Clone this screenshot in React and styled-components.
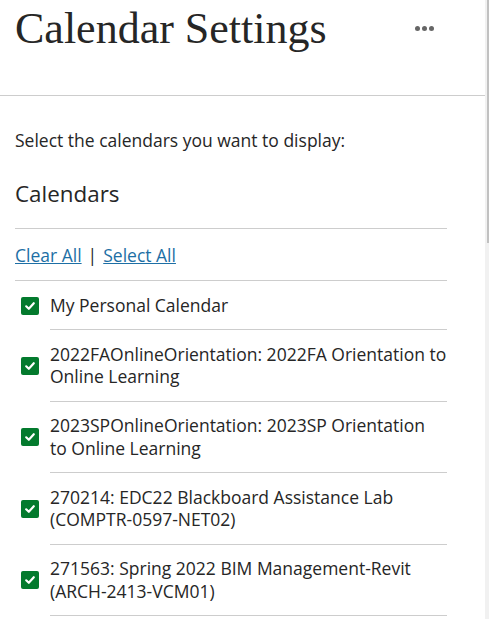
import styled, { createGlobalStyle } from "styled-components";

const calendars = [
  "My Personal Calendar",
  "2022FAOnlineOrientation: 2022FA Orientation to Online Learning",
  "2023SPOnlineOrientation: 2023SP Orientation to\u00A0Online Learning",
  "270214: EDC22 Blackboard Assistance Lab (COMPTR-0597-NET02)",
  "271563: Spring 2022 BIM Management-Revit (ARCH-2413-VCM01)",
];

export default function App() {
  return (
    <Page>
      <GlobalStyle />
      <Panel>
        <Header>
          <Title>Calendar Settings</Title>
          <MoreButton aria-label="More options">
            <Dot />
            <Dot />
            <Dot />
          </MoreButton>
        </Header>
        <Content>
          <Intro>Select the calendars you want to display:</Intro>
          <SectionTitle>Calendars</SectionTitle>
          <Links>
            <LinkText href="#">Clear All</LinkText>
            <Pipe>|</Pipe>
            <LinkText href="#">Select All</LinkText>
          </Links>
          <List>
            {calendars.map((name) => (
              <Item key={name}>
                <Check>
                  <svg width="12" height="12" viewBox="0 0 12 12">
                    <path
                      d="M2.2 6.3 L4.8 8.8 L9.8 3.2"
                      fill="none"
                      stroke="white"
                      strokeWidth="2.2"
                      strokeLinecap="round"
                      strokeLinejoin="round"
                    />
                  </svg>
                </Check>
                <Label>{name}</Label>
              </Item>
            ))}
          </List>
        </Content>
      </Panel>
      <Scrollbar>
        <Thumb />
      </Scrollbar>
    </Page>
  );
}

const GlobalStyle = createGlobalStyle`
  body {
    margin: 0;
    background: white;
    font-family: "Open Sans", sans-serif;
    color: #262626;
    overflow: hidden;
  }
`;

const Page = styled.div`
  display: flex;
  width: 489px;
  height: 619px;
  overflow: hidden;
`;

const Panel = styled.div`
  flex: 1;
  min-width: 0;
`;

const Header = styled.div`
  display: flex;
  justify-content: space-between;
  align-items: flex-start;
  height: 95px;
  padding: 0 51px 0 15px;
  border-bottom: 1px solid #cdcdcd;
`;

const Title = styled.h1`
  margin: 6px 0 0;
  font-family: "Liberation Serif", serif;
  font-weight: normal;
  font-size: 44px;
  line-height: 46px;
  color: #262626;
`;

const MoreButton = styled.button`
  display: flex;
  gap: 2px;
  margin-top: 26px;
  padding: 0;
  border: none;
  background: none;
`;

const Dot = styled.span`
  width: 5px;
  height: 5px;
  border-radius: 50%;
  background: #666;
`;

const Content = styled.div`
  padding: 0 38px 0 15px;
`;

const Intro = styled.p`
  margin: 33px 0 0;
  font-size: 17.5px;
  line-height: 23px;
`;

const SectionTitle = styled.h2`
  margin: 27px 0 0;
  padding-bottom: 19px;
  font-size: 22.4px;
  font-weight: normal;
  line-height: 30px;
  border-bottom: 1px solid #cdcdcd;
`;

const Links = styled.div`
  display: flex;
  align-items: center;
  gap: 6px;
  height: 51px;
  font-size: 17.5px;
  border-bottom: 1px solid #cdcdcd;
`;

const LinkText = styled.a`
  color: #1d6fa5;
  text-decoration: underline;
`;

const Pipe = styled.span`
  color: #262626;
`;

const List = styled.ul`
  margin: 0;
  padding: 0 0.5px 0 0;
  list-style: none;
`;

const Item = styled.li`
  display: flex;
  align-items: center;
  padding-left: 6px;
`;

const Check = styled.span`
  display: flex;
  align-items: center;
  justify-content: center;
  flex: none;
  width: 18px;
  height: 18px;
  margin-right: 11px;
  border-radius: 2px;
  background: #037a2d;
`;

const Label = styled.span`
  flex: 1;
  padding: 12.75px 0;
  font-size: 17.5px;
  line-height: 22.5px;
  border-bottom: 1px solid #cdcdcd;
`;

const Scrollbar = styled.div`
  flex: none;
  width: 4px;
  background: #f1f1f1;
  display: flex;
  justify-content: flex-end;
`;

const Thumb = styled.div`
  width: 2px;
  height: 243px;
  background: #c1c1c1;
`;
